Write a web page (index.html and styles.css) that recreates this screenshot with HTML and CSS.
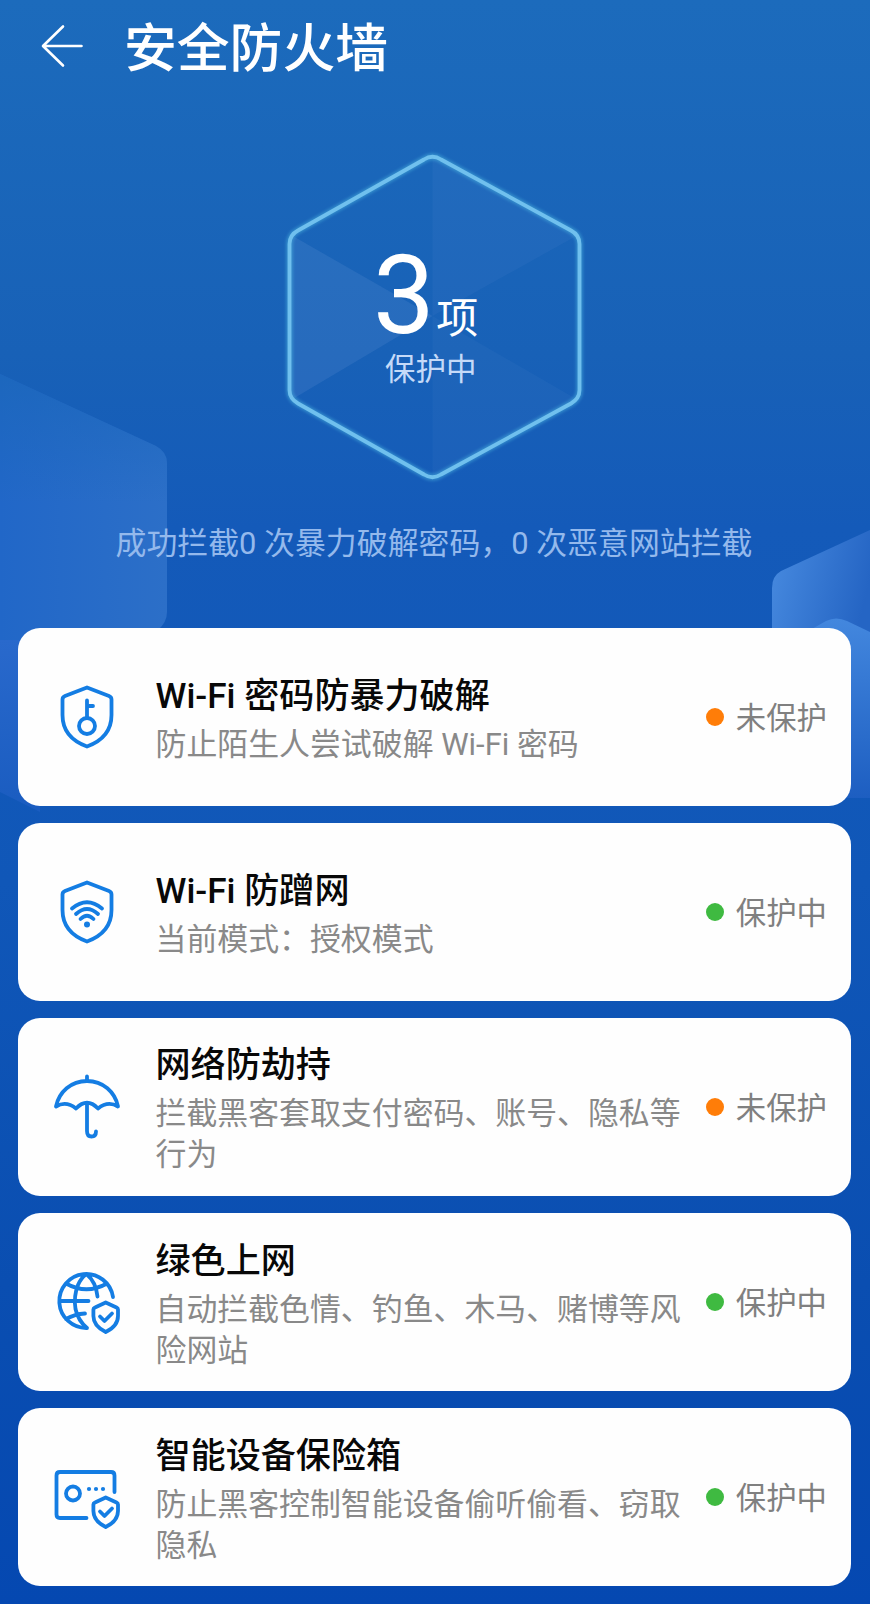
FILE: index.html
```html
<!DOCTYPE html>
<html lang="zh-CN">
<head>
<meta charset="utf-8">
<title>安全防火墙</title>
<link rel="stylesheet" href="styles.css">
</head>
<body>
<main class="screen">
  <svg class="backdrop" viewBox="0 0 870 1604" aria-hidden="true">
    <defs>
      <linearGradient id="leftFill" x1="0" y1="0" x2="1" y2="0">
        <stop offset="0" stop-color="#2167c8"/><stop offset="1" stop-color="#2c6fc8"/>
      </linearGradient>
      <linearGradient id="rightFill" x1="0" y1="0" x2="1" y2="0.35">
        <stop offset="0" stop-color="#488be0"/><stop offset="1" stop-color="#2565c4"/>
      </linearGradient>
      <linearGradient id="stripFill" x1="0" y1="0" x2="0" y2="1">
        <stop offset="0" stop-color="#4387de"/><stop offset="1" stop-color="#1d5ec1"/>
      </linearGradient>
      <linearGradient id="leftStrip" x1="0" y1="0" x2="0" y2="1">
        <stop offset="0" stop-color="#2969cc"/><stop offset="1" stop-color="#1a5cc0"/>
      </linearGradient>
      <linearGradient id="leftTop" x1="0" y1="0" x2="0" y2="1">
        <stop offset="0" stop-color="#1b67ba" stop-opacity=".75"/><stop offset=".45" stop-color="#1b67ba" stop-opacity="0"/>
      </linearGradient>
    </defs>
    <path d="M0 374L156 446Q167 452 167 463V612Q167 622 158 630L100 660H0Z" fill="url(#leftFill)"/>
    <path d="M0 374L156 446Q167 452 167 463V612Q167 622 158 630L100 660H0Z" fill="url(#leftTop)"/>
    <path d="M0 640H40V812L0 792Z" fill="url(#leftStrip)"/>
    <path d="M870 530L781 571Q772 576 772 588V670H870Z" fill="url(#rightFill)"/>
    <path d="M810 630L826 621Q836 616 847 621L870 632V798H810Z" fill="url(#stripFill)"/>
  </svg>

  <header class="topbar">
    <svg class="back" viewBox="0 0 44 44"><path d="M23 2.500L3 22L23 41.500M3.500 22H41.500"/></svg>
    <h1 class="heading">安全防火墙</h1>
  </header>

  <section class="hero">
    <svg class="hex" viewBox="0 0 310 350">
      <defs>
        <path id="ring" d="M144 16.500Q152.500 11 161 16.500L291 87.500Q299.500 92 299.500 101V247Q299.500 255.500 291 260.500L161 331.500Q152.500 337 144 331.500L18 260.500Q9.500 255.500 9.500 247V101Q9.500 92 18 87.500Z"/>
      </defs>
      <g class="facets">
        <path d="M152.500 14L298 92L152.500 173Z" opacity=".045"/>
        <path d="M11 92L152.500 173L11 257Z" opacity=".085"/>
        <path d="M152.500 173L298 257L152.500 335Z" opacity=".035"/>
      </g>
      <use href="#ring" class="glow"/>
      <use href="#ring" class="line"/>
    </svg>
    <div class="score">
      <div class="count"><span class="number">3</span><span class="unit">项</span></div>
      <div class="state">保护中</div>
    </div>
  </section>
  <p class="summary">成功拦截0 次暴力破解密码，0 次恶意网站拦截</p>

  <section class="cards">
    <article class="card">
      <svg class="icon" viewBox="0 0 72 72">
        <path d="M36 6.500L58 15Q60.500 16 60.500 18.500V34C60.500 50 51 60 36 65.500C21 60 11.500 50 11.500 34V18.500Q11.500 16 14 15Z"/>
        <circle cx="36" cy="45" r="8"/><path d="M36 37V19.500M36 25H42"/>
      </svg>
      <div class="body"><h2 class="title">Wi-Fi 密码防暴力破解</h2><p class="desc">防止陌生人尝试破解 Wi-Fi 密码</p></div>
      <div class="status off"><i class="dot"></i><span class="label">未保护</span></div>
    </article>
    <article class="card">
      <svg class="icon" viewBox="0 0 72 72">
        <path d="M36 6.500L58 15Q60.500 16 60.500 18.500V34C60.500 50 51 60 36 65.500C21 60 11.500 50 11.500 34V18.500Q11.500 16 14 15Z"/>
        <path d="M21 32.500Q36 20 51 32.500M25 38Q36 28 47 38M29.500 43Q36 36.500 42.500 43"/><circle class="solid" cx="36" cy="48.500" r="3"/>
      </svg>
      <div class="body"><h2 class="title">Wi-Fi 防蹭网</h2><p class="desc">当前模式：授权模式</p></div>
      <div class="status on"><i class="dot"></i><span class="label">保护中</span></div>
    </article>
    <article class="card">
      <svg class="icon" viewBox="0 0 72 72">
        <path d="M36 5.500V10M5 35.500C8 21 20 10 36 10S64 21 67 35.500Q57 29.500 47 37.500Q36 26 25 37.500Q15 29.500 5 35.500ZM36 33V60Q36 65.500 40.500 65.500Q45 65.500 45 60.500"/>
      </svg>
      <div class="body"><h2 class="title">网络防劫持</h2><p class="desc">拦截黑客套取支付密码、账号、隐私等行为</p></div>
      <div class="status off"><i class="dot"></i><span class="label">未保护</span></div>
    </article>
    <article class="card">
      <svg class="icon" viewBox="0 0 72 72">
        <path d="M36 62A27 27 0 1 1 62 31M36 62Q27 54.500 24.500 43Q22.500 30 27 19Q30 12 35.500 8Q45 16 46.500 30.500M15 17.500Q35.500 29 56 17.500M9 35H37.500M15 53Q24 48 34 47.500"/>
        <path d="M54.700 36.500L65.500 41.500Q67 42.200 67 43.500V50C67 58 62 62.500 54.700 66C47.500 62.500 42.400 58 42.400 50V43.500Q42.400 42.200 44 41.500Z"/><path d="M49 50.500L53.500 55L61 47.500"/>
      </svg>
      <div class="body"><h2 class="title">绿色上网</h2><p class="desc">自动拦截色情、钓鱼、木马、赌博等风险网站</p></div>
      <div class="status on"><i class="dot"></i><span class="label">保护中</span></div>
    </article>
    <article class="card">
      <svg class="icon" viewBox="0 0 72 72">
        <path d="M35.500 57H9Q5.500 57 5.500 53.500V14.500Q5.500 11 9 11H60Q63.500 11 63.500 14.500V31"/>
        <circle cx="22" cy="32.500" r="7"/>
        <g class="solid"><circle cx="38" cy="28" r="2.100"/><circle cx="45" cy="28" r="2.100"/><circle cx="52" cy="28" r="2.100"/></g>
        <path d="M54.700 36.500L65.500 41.500Q67 42.200 67 43.500V50C67 58 62 62.500 54.700 66C47.500 62.500 42.400 58 42.400 50V43.500Q42.400 42.200 44 41.500Z"/><path d="M49 50.500L53.500 55L61 47.500"/>
      </svg>
      <div class="body"><h2 class="title">智能设备保险箱</h2><p class="desc">防止黑客控制智能设备偷听偷看、窃取隐私</p></div>
      <div class="status on"><i class="dot"></i><span class="label">保护中</span></div>
    </article>
  </section>
</main>
</body>
</html>
```
FILE: styles.css
```css
* { box-sizing: border-box; margin: 0; padding: 0; }

body {
  width: 870px;
  font-family: Roboto, "Noto Sans CJK SC", sans-serif;
}

.screen {
  position: relative;
  height: 1604px;
  overflow: hidden;
  background: linear-gradient(180deg, #1c6bbc 0%, #1861b7 22%, #145ab9 33%, #1057b8 55%, #0a4eb1 80%, #0548b1 100%);
}

.backdrop { position: absolute; inset: 0; width: 870px; height: 1604px; }

.topbar {
  position: relative;
  display: flex;
  align-items: center;
  height: 97px;
  padding-left: 40px;
}
.back {
  width: 44px;
  height: 44px;
  margin: -6px 40px 0 0;
  fill: none;
  stroke: #fff;
  stroke-width: 2.6;
  stroke-linecap: round;
  stroke-linejoin: round;
}
.heading { padding-top: 1px; font-size: 52.8px; font-weight: 500; line-height: 76px; color: #fff; }

.hero {
  position: relative;
  display: grid;
  width: 310px;
  height: 350px;
  margin: 47px 0 0 279.5px;
}
.hex, .score { grid-area: 1 / 1; }
.hex { width: 310px; height: 350px; margin-top: -1px; fill: none; }
.facets { fill: #cfd8ff; }
.glow { stroke: #4cb4df; stroke-width: 7; opacity: .5; filter: blur(1.5px); }
.line { stroke: #70c0ee; stroke-width: 3.8; }
.score { display: flex; flex-direction: column; padding-top: 102px; color: #fff; }
.count { display: flex; align-items: baseline; height: 104px; margin-left: 93.5px; line-height: 100px; }
.number { font-size: 110px; }
.unit { font-size: 42px; margin-left: 1.5px; padding-top: 1px; }
.state { margin-left: 105.5px; font-size: 30.5px; line-height: 40px; color: #c5daf8; }

.summary {
  position: relative;
  margin-top: 29px;
  padding-right: 2px;
  text-align: center;
  font-size: 30.9px;
  line-height: 42px;
  color: #94b9ec;
  white-space: nowrap;
}

.cards {
  position: relative;
  display: flex;
  flex-direction: column;
  gap: 17.5px;
  margin: 63px 19px 0 17.5px;
}
.card {
  display: flex;
  align-items: center;
  height: 177.6px;
  padding: 0 24px 0 33px;
  border-radius: 22px;
  background: #fefefe;
}
.icon {
  flex: none;
  width: 72px;
  height: 72px;
  fill: none;
  stroke: #147de3;
  stroke-width: 3.8;
  stroke-linecap: round;
  stroke-linejoin: round;
}
.icon .solid { fill: #147de3; stroke: none; }
.body { width: 528px; margin-left: 33px; padding-top: 2px; }
.title { font-size: 35.1px; font-weight: 500; line-height: 50px; color: #080808; }
.desc { padding-top: 3px; font-size: 30.9px; line-height: 41px; color: #898989; }
.status {
  display: flex;
  flex: none;
  align-items: center;
  gap: 12px;
  margin-left: auto;
}
.label { padding-top: 4px; font-size: 30.4px; line-height: 42px; color: #808080; }
.dot { width: 18px; height: 18px; border-radius: 50%; }
.off .dot { background: #ff7d08; }
.on .dot { background: #3fba41; }
```
